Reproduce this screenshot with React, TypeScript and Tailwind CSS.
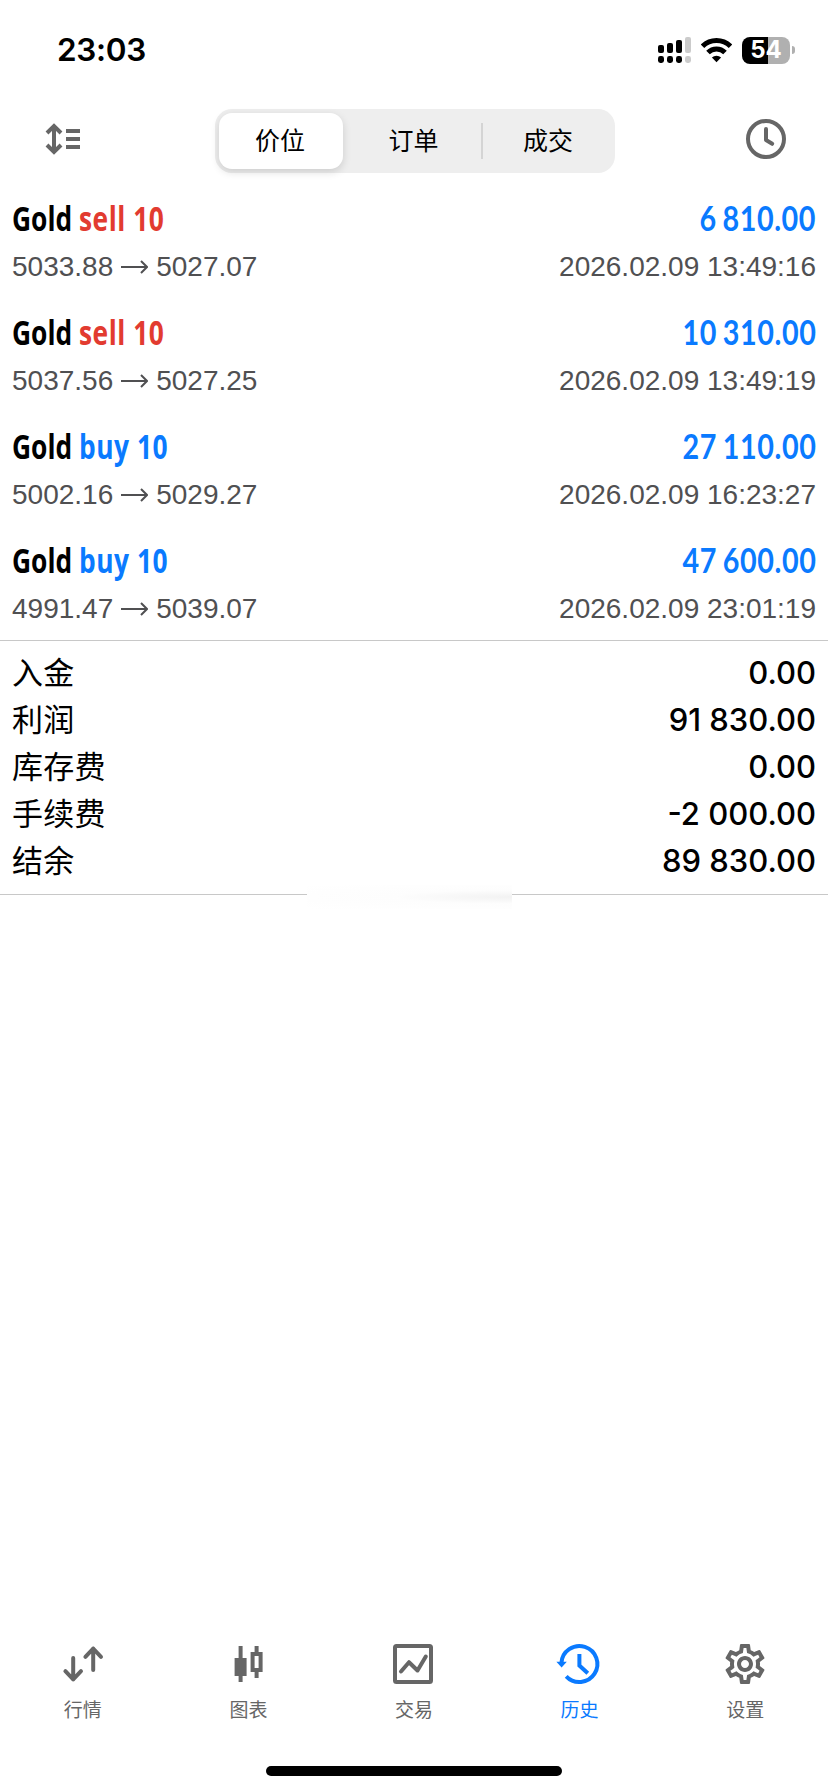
import clsx from 'clsx';
import { MdOutlineSettings } from 'react-icons/md';

const segments = ['价位', '订单', '成交'];

const deals = [
  { id: 1, side: 'sell', from: '5033.88', to: '5027.07', profit: '6 810.00', time: '2026.02.09 13:49:16' },
  { id: 2, side: 'sell', from: '5037.56', to: '5027.25', profit: '10 310.00', time: '2026.02.09 13:49:19' },
  { id: 3, side: 'buy', from: '5002.16', to: '5029.27', profit: '27 110.00', time: '2026.02.09 16:23:27' },
  { id: 4, side: 'buy', from: '4991.47', to: '5039.07', profit: '47 600.00', time: '2026.02.09 23:01:19' },
];

const summary = [
  { label: '入金', value: '0.00' },
  { label: '利润', value: '91 830.00' },
  { label: '库存费', value: '0.00' },
  { label: '手续费', value: '-2 000.00' },
  { label: '结余', value: '89 830.00' },
];

const QuotesIcon = () => (
  <svg className="size-12" viewBox="0 0 48 48" fill="none" stroke="currentColor" strokeWidth="4" strokeLinecap="round" strokeLinejoin="round">
    <path d="M14.2 18v21.5M6.4 31.2l7.8 8.2 7.8-8.2M34.2 30V8.5M26.4 16.8l7.8-8.2 7.8 8.2" />
  </svg>
);

const ChartIcon = () => (
  <svg className="size-12" viewBox="0 0 48 48" fill="currentColor">
    <path d="M14.6 6h4v12h4v18h-4v6h-4v-6h-4V18h4z" />
    <path fillRule="evenodd" d="M30.6 6h4v6h4v20h-4v6h-4v-6h-4V12h4zM30.6 16v12h4V16z" />
  </svg>
);

const TradeIcon = () => (
  <svg className="size-12" viewBox="0 0 48 48" fill="none" stroke="currentColor" strokeWidth="4" strokeLinecap="round" strokeLinejoin="round">
    <rect x="5" y="6" width="36" height="36" rx="1.5" />
    <path d="M11 31.5l8-9.3 8.5 8.3 8.3-14" />
  </svg>
);

const HistoryIcon = () => (
  <svg className="size-12" viewBox="0 0 48 48" fill="none" stroke="currentColor" strokeWidth="4">
    <path d="M5.4 23A18 18 0 1 1 10.2 36.3M23.4 14v11.5l8.4 7.7" />
    <path d="M0.4 21.8h10.4l-5.2 5.6z" fill="currentColor" stroke="none" />
  </svg>
);

const SettingsIcon = () => <MdOutlineSettings className="size-12" />;

const tabs = [
  { label: '行情', Icon: QuotesIcon, active: false },
  { label: '图表', Icon: ChartIcon, active: false },
  { label: '交易', Icon: TradeIcon, active: false },
  { label: '历史', Icon: HistoryIcon, active: true },
  { label: '设置', Icon: SettingsIcon, active: false },
];

const StatusBar = () => (
  <div className="flex h-[100px] items-center justify-between pl-[57px] pr-[33px]">
    <span className="font-['Inter'] text-[31.5px] leading-[38px] font-semibold tracking-[-0.01em]">23:03</span>
    <div className="flex items-center">
      <svg className="mr-[10px] h-[27px] w-[33px]" viewBox="0 0 33 27">
        <g fill="#000">
          <rect x="0" y="8" width="6" height="8" rx="2" />
          <rect x="9" y="6" width="6" height="10" rx="2" />
          <rect x="18" y="3" width="6" height="13" rx="2" />
          <rect x="0" y="19" width="6" height="7" rx="2.4" />
          <rect x="9" y="19" width="6" height="7" rx="2.4" />
          <rect x="18" y="19" width="6" height="7" rx="2.4" />
        </g>
        <g fill="#cbcbcb">
          <rect x="27" y="0" width="6" height="16" rx="2" />
          <rect x="27" y="19" width="6" height="7" rx="2.4" />
        </g>
      </svg>
      <svg className="mr-[10px] h-[27px] w-[31px]" viewBox="0 0 31 27" fill="none" stroke="#000" strokeWidth="5">
        <path d="M1.5 9.2a20.2 20.2 0 0 1 28 0" />
        <path d="M7 15.6a12 12 0 0 1 17 0" />
        <path d="M15.5 25.2l-4.6-4.6a6.6 6.6 0 0 1 9.2 0z" fill="#000" stroke="none" />
      </svg>
      <div className="flex h-[27px] w-12 items-center justify-center rounded-lg bg-[linear-gradient(90deg,#000_54%,#b0b0b0_54%)] font-['Inter'] text-2xl leading-none font-bold text-white">
        54
      </div>
      <div className="ml-[2px] h-[8px] w-[3px] rounded-r-full bg-[#b0b0b0]" />
    </div>
  </div>
);

const Header = () => (
  <header className="flex h-[82px] items-center justify-between pr-[36px] pl-[38px] text-[#666]">
    <svg className="mb-[6px] size-12" viewBox="0 0 48 48" fill="none" stroke="currentColor" strokeWidth="4">
      <path d="M16 12v26M9 19l7-7 7 7M9 31l7 7 7-7M28 17h14M28 25h14M28 33h14" />
    </svg>
    <div className="flex h-16 w-[400px] items-center rounded-[17px] bg-[#eee] p-1 text-[25px] text-black">
      {segments.map((segment, index) => (
        <div
          key={segment}
          className={clsx(
            'flex items-center justify-center pt-px',
            index === 0 && 'h-14 w-[124px] rounded-[13px] bg-white pr-[2px] shadow-[0_3px_8px_rgba(0,0,0,0.14)]',
            index === 1 && 'h-9 w-[140px] border-r-2 border-[#d4d4d4] pl-[3px]',
            index === 2 && 'h-9 w-[128px] pl-[2px]'
          )}>
          {segment}
        </div>
      ))}
    </div>
    <svg className="mb-[6px] size-12" viewBox="0 0 48 48" fill="none" stroke="currentColor" strokeWidth="4" strokeLinecap="round" strokeLinejoin="round">
      <circle cx="22" cy="25" r="18" />
      <path d="M22 15v11l6.2 3.8" />
    </svg>
  </header>
);

const Arrow = () => (
  <svg className="mx-[8px] h-5 w-[27px]" viewBox="0 0 27 20" fill="none" stroke="currentColor" strokeWidth="2">
    <path d="M0 10h25M20 4l6 6-6 6" />
  </svg>
);

const App = () => {
  return (
    <div className="flex h-[1792px] w-[828px] flex-col bg-white font-['Inter','Noto_Sans_CJK_SC',sans-serif] text-black">
      <StatusBar />
      <Header />

      <ul className="flex h-[458px] flex-col px-3 pt-[12px]">
        {deals.map(deal => (
          <li key={deal.id} className="h-[114px] shrink-0">
            <div className="flex h-12 items-center justify-between text-[34px] font-bold whitespace-nowrap">
              <span className="origin-left scale-x-[0.775] font-['Open_Sans']">
                Gold{' '}
                <span
                  className={clsx(
                    'tracking-[0.02em]',
                    deal.side === 'sell' ? 'text-[#e23b30]' : 'text-[#0a7aff]'
                  )}>
                  {deal.side} 10
                </span>
              </span>
              <span className="origin-right scale-x-[0.845] pb-px font-['Lato'] tracking-[0.02em] text-[#0a7aff] [word-spacing:-0.06em]">
                {deal.profit}
              </span>
            </div>
            <div className="mt-[3px] flex h-11 items-center justify-between font-['Liberation_Sans'] text-[28px] text-[#505052]">
              <span className="flex items-center">
                {deal.from}
                <Arrow />
                {deal.to}
              </span>
              <span>{deal.time}</span>
            </div>
          </li>
        ))}
      </ul>

      <dl className="border-y border-[#c8c8c8] px-3 pt-[9px] pb-[9px]">
        {summary.map(row => (
          <div key={row.label} className="flex h-[47px] items-center justify-between">
            <dt className="text-[31px] tracking-[0.01em]">{row.label}</dt>
            <dd className="font-['Inter'] text-[31px] font-medium">{row.value}</dd>
          </div>
        ))}
      </dl>
      {/* faded stretch of the bottom divider */}
      <div className="relative -top-[10px] ml-[307px] h-[24px] w-[205px] bg-[radial-gradient(ellipse_at_right,#f2f2f2,#fdfdfd_40%,#fff)]" />

      <nav className="mt-auto flex h-[126px]">
        {tabs.map(({ label, Icon, active }) => (
          <div
            key={label}
            className={clsx('flex flex-1 flex-col items-center', active ? 'text-[#0a7aff]' : 'text-[#666]')}>
            <Icon />
            <span className="mt-[9px] text-[19px] leading-7">{label}</span>
          </div>
        ))}
      </nav>
      <div className="mx-auto mb-4 h-[10px] w-[296px] rounded-full bg-black" />
    </div>
  );
};

export default App;
